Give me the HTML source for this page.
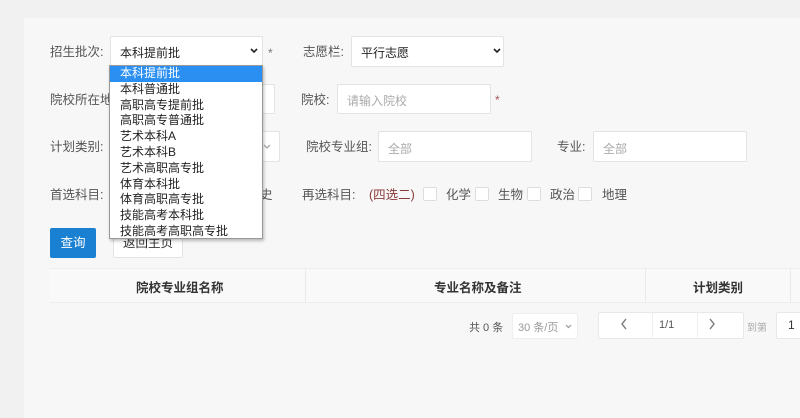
<!DOCTYPE html>
<html><head><meta charset="utf-8"><style>
*{box-sizing:border-box;margin:0;padding:0}
body{width:800px;height:400px;overflow:hidden;background:#f1f1f1;font-family:"Liberation Sans","Noto Sans CJK SC",sans-serif;font-size:12px;color:#444;position:relative}
.a{position:absolute}
.panel{left:24px;top:18px;width:800px;height:400px;background:#f7f7f7}
.lbl{font-size:12.5px;color:#555;line-height:16px}
.box{background:#fff;border:1px solid #e3e3e3;border-radius:2px}
.ph{color:#aaa;font-size:12px}
.star{color:#777;font-size:12px}
.cb{width:14px;height:14px;background:#fff;border:1px solid #ddd;border-radius:2px}
.dd{left:109px;top:65px;width:154px;height:174px;background:#fff;border:1px solid #999;box-shadow:1px 2px 3px rgba(0,0,0,.25)}
.dd div{height:15.8px;line-height:15.8px;padding-left:10px;font-size:12px;color:#222}
.dd .sel{background:#2a8ff0;color:#fff}
.th{font-weight:bold;font-size:12.5px;color:#333}
</style></head><body>
<div class="a panel"></div>
<div class="a lbl" style="left:50px;top:44px">招生批次:</div>
<div class="a box" style="left:110px;top:36px;width:153px;height:31px"></div>
<div class="a" style="left:120px;top:44px;font-size:12px;color:#222">本科提前批</div>
<svg class="a" style="left:250px;top:48px" width="8" height="6"><path d="M1 1L4 4L7 1" stroke="#222" stroke-width="1.6" fill="none"/></svg>
<div class="a star" style="left:268px;top:46px">*</div>
<div class="a lbl" style="left:303px;top:44px">志愿栏:</div>
<div class="a box" style="left:351px;top:36px;width:153px;height:31px"></div>
<div class="a" style="left:361px;top:44px;color:#222">平行志愿</div>
<svg class="a" style="left:493px;top:48px" width="8" height="6"><path d="M1 1L4 4L7 1" stroke="#222" stroke-width="1.6" fill="none"/></svg>

<div class="a lbl" style="left:50px;top:92px">院校所在地</div>
<div class="a box" style="left:200px;top:84px;width:75px;height:30px"></div>
<div class="a lbl" style="left:301px;top:92px">院校:</div>
<div class="a box" style="left:337px;top:84px;width:154px;height:30px"></div>
<div class="a ph" style="left:347px;top:92px">请输入院校</div>
<div class="a star" style="left:495px;top:93px;color:#a55">*</div>

<div class="a lbl" style="left:50px;top:139px">计划类别:</div>
<div class="a box" style="left:200px;top:131px;width:80px;height:31px"></div>
<svg class="a" style="left:263px;top:144px" width="8" height="6"><path d="M1 1L4 4L7 1" stroke="#aaa" stroke-width="1.3" fill="none"/></svg>
<div class="a lbl" style="left:306px;top:139px">院校专业组:</div>
<div class="a box" style="left:378px;top:131px;width:154px;height:31px"></div>
<div class="a ph" style="left:388px;top:140px">全部</div>
<div class="a lbl" style="left:557px;top:139px">专业:</div>
<div class="a box" style="left:593px;top:131px;width:154px;height:31px"></div>
<div class="a ph" style="left:603px;top:140px">全部</div>

<div class="a lbl" style="left:50px;top:187px">首选科目:</div>
<div class="a lbl" style="left:260px;top:187px">史</div>
<div class="a lbl" style="left:302px;top:187px">再选科目:</div>
<div class="a lbl" style="left:369px;top:187px;color:#8a3a3a">(四选二)</div>
<div class="a cb" style="left:423px;top:187px"></div><div class="a lbl" style="left:446px;top:187px">化学</div>
<div class="a cb" style="left:475px;top:187px"></div><div class="a lbl" style="left:498px;top:187px">生物</div>
<div class="a cb" style="left:527px;top:187px"></div><div class="a lbl" style="left:550px;top:187px">政治</div>
<div class="a cb" style="left:578px;top:187px"></div><div class="a lbl" style="left:602px;top:187px">地理</div>

<div class="a" style="left:50px;top:228px;width:46px;height:30px;background:#1a80d2;border-radius:2px;color:#fff;text-align:center;line-height:30px;font-size:12.5px">查询</div>
<div class="a box" style="left:113px;top:229px;width:70px;height:29px;text-align:center;line-height:26px;color:#333;font-size:12.5px">返回主页</div>

<div class="a" style="left:50px;top:268px;width:760px;height:35px;background:#f9f9f9;border-top:1px solid #eee;border-bottom:1px solid #eee"></div>
<div class="a" style="left:305px;top:268px;width:1px;height:35px;background:#eaeaea"></div>
<div class="a" style="left:645px;top:268px;width:1px;height:35px;background:#eaeaea"></div>
<div class="a" style="left:790px;top:268px;width:1px;height:35px;background:#eaeaea"></div>
<div class="a th" style="left:136px;top:277px">院校专业组名称</div>
<div class="a th" style="left:434px;top:277px">专业名称及备注</div>
<div class="a th" style="left:693px;top:277px">计划类别</div>

<div class="a" style="left:469px;top:319px;color:#555;font-size:11px">共 0 条</div>
<div class="a box" style="left:512px;top:313px;width:66px;height:26px;border-color:#eee"></div>
<div class="a" style="left:518px;top:319px;color:#999;font-size:11px">30 条/页</div>
<svg class="a" style="left:565px;top:324px" width="7" height="5"><path d="M1 1L3.5 3.5L6 1" stroke="#999" stroke-width="1.2" fill="none"/></svg>
<div class="a box" style="left:598px;top:312px;width:146px;height:27px;border-color:#e8e8e8"></div>
<div class="a" style="left:652px;top:312px;width:1px;height:27px;background:#eee"></div>
<div class="a" style="left:697px;top:312px;width:1px;height:27px;background:#eee"></div>
<svg class="a" style="left:620px;top:318px" width="8" height="12"><path d="M6 1L2 6L6 11" stroke="#777" stroke-width="1.4" fill="none"/></svg>
<div class="a" style="left:659px;top:319px;font-size:11px;color:#555">1/1</div>
<svg class="a" style="left:708px;top:318px" width="8" height="12"><path d="M2 1L6 6L2 11" stroke="#777" stroke-width="1.4" fill="none"/></svg>
<div class="a" style="left:747px;top:319px;font-size:10px;color:#aaa">到第</div>
<div class="a box" style="left:776px;top:312px;width:40px;height:27px;border-color:#e8e8e8"></div>
<div class="a" style="left:788px;top:318px;font-size:12px;color:#333">1</div>

<div class="a dd">
<div class="sel">本科提前批</div><div>本科普通批</div><div>高职高专提前批</div><div>高职高专普通批</div><div>艺术本科A</div><div>艺术本科B</div><div>艺术高职高专批</div><div>体育本科批</div><div>体育高职高专批</div><div>技能高考本科批</div><div>技能高考高职高专批</div>
</div>
</body></html>
